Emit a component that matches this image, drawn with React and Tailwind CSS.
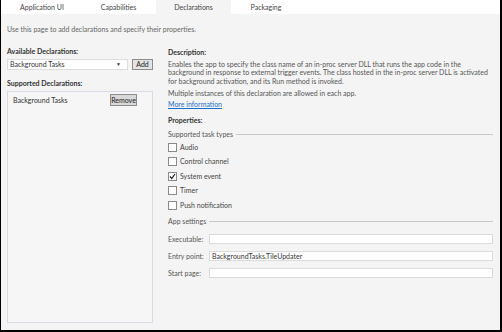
import React from 'react';

const tabs = [
  { label: 'Application UI', w: 'w-[78px]' },
  { label: 'Capabilities', w: 'w-[75px]' },
  { label: 'Declarations', w: 'w-[75px]' },
  { label: 'Packaging', w: 'w-[70px]' },
];
const taskTypes = [
  { label: 'Audio', checked: false },
  { label: 'Control channel', checked: false },
  { label: 'System event', checked: true },
  { label: 'Timer', checked: false },
  { label: 'Push notification', checked: false },
];

function Box({ checked }) {
  return (
    <span className="w-[9px] h-[9px] border border-[#8a8a8a] bg-white flex items-center justify-center shrink-0">
      {checked && (
        <svg width="7" height="7" viewBox="0 0 7 7">
          <path d="M1 3.5 L2.8 5.5 L6 1" fill="none" stroke="#222" strokeWidth="1.2" />
        </svg>
      )}
    </span>
  );
}

function GroupTitle({ children }) {
  return (
    <div className="flex items-center gap-[3px] h-[10px]">
      <span>{children}</span>
      <span className="flex-1 h-px bg-[#c8c8c8]" />
    </div>
  );
}

function Field({ label, value }) {
  return (
    <div className="flex items-center h-[17px]">
      <span className="w-[41px] shrink-0 whitespace-nowrap">{label}</span>
      <div className="flex-1 h-[10px] bg-white border border-[#dadada] flex items-center px-[2px] text-[#333]">
        {value}
      </div>
    </div>
  );
}

export default function App() {
  return (
    <div
      className="w-[502px] h-[332px] bg-[#f4f4f4] border-l border-r-2 border-b-2 border-black flex flex-col text-[7px] text-[#555] leading-none overflow-hidden"
      style={{ fontFamily: 'Lato, "Open Sans", sans-serif' }}
    >
      <div className="flex h-[14px] bg-white shrink-0 pl-[2px]">
        {tabs.map((t) => (
          <div
            key={t.label}
            className={
              t.w +
              ' flex items-center justify-center text-[#444] ' +
              (t.label === 'Declarations' ? 'bg-[#f4f4f4]' : '')
            }
          >
            {t.label}
          </div>
        ))}
        <div className="flex-1" />
      </div>

      <div className="px-[6px] pt-[11.5px] h-[18.5px] text-[#666]">
        Use this page to add declarations and specify their properties.
      </div>

      <div className="flex flex-1 min-h-0 pt-[14px] pb-[7px] pl-[6px] pr-[7px] gap-[15px]">
        <div className="w-[146px] flex flex-col shrink-0">
          <div className="font-bold text-[#333] h-[9px] flex items-center">Available Declarations:</div>
          <div className="flex items-center gap-[4px] mt-[3.5px]">
            <div className="w-[121px] h-[11px] bg-white border border-[#dcdcdc] flex items-center justify-between px-[2px] text-[#333]">
              <span>Background Tasks</span>
              <span className="text-[5px] mr-[4px]">▼</span>
            </div>
            <div className="w-[21px] h-[11px] bg-[#e4e4e4] border border-[#8c8c8c] flex items-center justify-center text-[#222]">
              Add
            </div>
          </div>
          <div className="font-bold text-[#333] mt-[8.5px] h-[9px] flex items-center">Supported Declarations:</div>
          <div className="mt-[3.5px] flex-1 border border-[#dad9e6] bg-[#f6f6f6] pl-[5px] pr-[15px] pt-[2px]">
            <div className="flex items-center justify-between h-[12px] text-[#333]">
              <span>Background Tasks</span>
              <span className="h-[12px] w-[27px] bg-[#d8d8d8] border border-[#8c8c8c] flex items-center justify-center text-[#222]">
                Remove
              </span>
            </div>
          </div>
        </div>

        <div className="flex-1 min-w-0 flex flex-col pt-[1px]">
          <div className="font-bold text-[#333] h-[9px] flex items-center">Description:</div>
          <p className="mt-[3px] leading-[8.7px] whitespace-nowrap">
            Enables the app to specify the class name of an in-proc server DLL that runs the app code in the
            <br />
            background in response to external trigger events. The class hosted in the in-proc server DLL is activated
            <br />
            for background activation, and its Run method is invoked.
          </p>
          <p className="mt-[3px] leading-[8.7px]">Multiple instances of this declaration are allowed in each app.</p>
          <a className="mt-[2.3px] leading-[8.7px] text-[#1a6fc9] underline w-fit">More information</a>
          <div className="font-bold text-[#333] mt-[8px] h-[9px] flex items-center">Properties:</div>
          <div className="mt-[4.5px]">
            <GroupTitle>Supported task types</GroupTitle>
          </div>
          <div className="flex flex-col">
            {taskTypes.map((t) => (
              <div key={t.label} className="flex items-center gap-[3px] h-[14.5px]">
                <Box checked={t.checked} />
                <span className="text-[#444]">{t.label}</span>
              </div>
            ))}
          </div>
          <div className="mt-[3.75px]">
            <GroupTitle>App settings</GroupTitle>
          </div>
          <div className="mt-[4.5px] flex flex-col">
            <Field label="Executable:" value="" />
            <Field label="Entry point:" value="BackgroundTasks.TileUpdater" />
            <Field label="Start page:" value="" />
          </div>
        </div>
      </div>
    </div>
  );
}
